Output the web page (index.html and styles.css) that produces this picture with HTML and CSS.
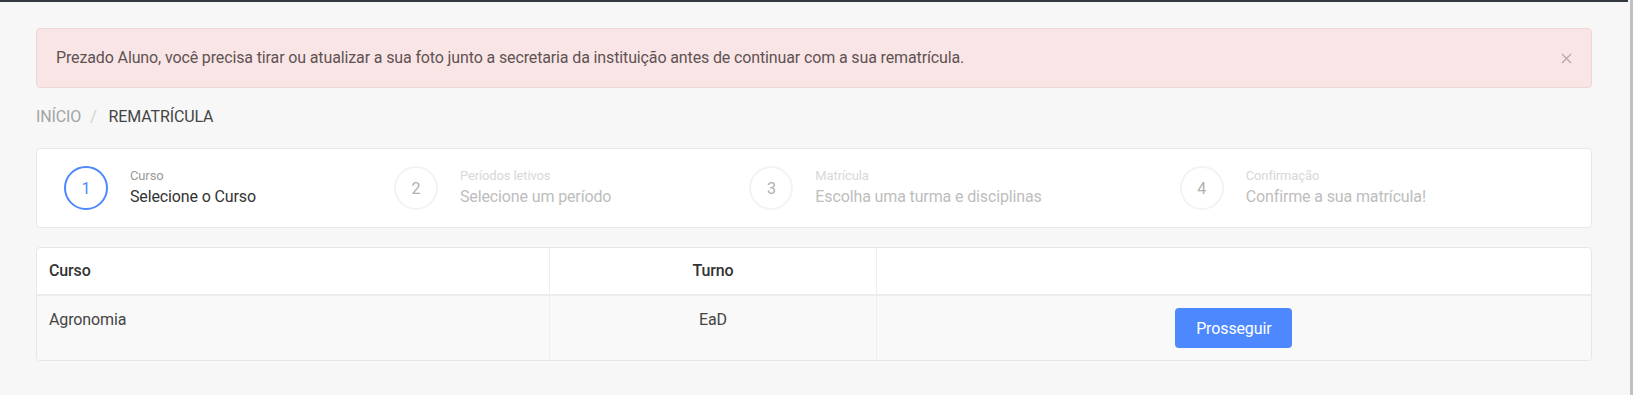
FILE: index.html
```html
<!DOCTYPE html>
<html>
<head>
  <meta charset="utf-8" />
  <title>Rematrícula</title>
  <meta name="viewport" content="width=device-width, initial-scale=1">
  <link rel="stylesheet" href="styles.css">
</head>
<body>
  <div class="shell">
    <div class="page">
      <div class="topbar"></div>
      <main class="content">
        <div class="alert">
          <span class="alert-text">Prezado Aluno, você precisa tirar ou atualizar a sua foto junto a secretaria da instituição antes de continuar com a sua rematrícula.</span>
          <button class="close" type="button" aria-label="Fechar">
            <svg width="11" height="11" viewBox="0 0 11 11"><path d="M1 1 L10 10 M10 1 L1 10" stroke="#b3a6a7" stroke-width="1.2" fill="none"/></svg>
          </button>
        </div>

        <ol class="breadcrumb">
          <li class="crumb">Início</li>
          <li class="crumb active">Rematrícula</li>
        </ol>

        <div class="stepper">
          <div class="step current">
            <div class="step-num">1</div>
            <div class="step-text">
              <div class="step-label">Curso</div>
              <div class="step-title">Selecione o Curso</div>
            </div>
          </div>
          <div class="step">
            <div class="step-num">2</div>
            <div class="step-text">
              <div class="step-label">Períodos letivos</div>
              <div class="step-title">Selecione um período</div>
            </div>
          </div>
          <div class="step">
            <div class="step-num">3</div>
            <div class="step-text">
              <div class="step-label">Matrícula</div>
              <div class="step-title">Escolha uma turma e disciplinas</div>
            </div>
          </div>
          <div class="step">
            <div class="step-num">4</div>
            <div class="step-text">
              <div class="step-label">Confirmação</div>
              <div class="step-title">Confirme a sua matrícula!</div>
            </div>
          </div>
        </div>

        <div class="table-card">
          <table class="courses">
            <thead>
              <tr>
                <th class="col-curso">Curso</th>
                <th class="col-turno">Turno</th>
                <th></th>
              </tr>
            </thead>
            <tbody>
              <tr>
                <td>Agronomia</td>
                <td class="center">EaD</td>
                <td class="center"><button class="btn" type="button">Prosseguir</button></td>
              </tr>
            </tbody>
          </table>
        </div>
      </main>
    </div>
    <div class="scrollbar"></div>
  </div>
</body>
</html>
```

FILE: styles.css
```css
html, body {
  margin: 0;
  padding: 0;
}

body {
  background: #f7f7f7;
  font-family: Roboto, "Liberation Sans", sans-serif;
  font-size: 16px;
  letter-spacing: -0.13px;
  color: #333;
}

.shell {
  display: flex;
  min-height: 100vh;
}

.page {
  flex: 1;
}

.scrollbar {
  width: 3px;
  margin-left: 2px;
  background: #c1c1c1;
}

.topbar {
  height: 2px;
  background: #343a40;
}

.content {
  padding: 26px 36px 0 36px;
}

/* alert */
.alert {
  display: flex;
  align-items: center;
  padding: 17px 19px 17px 19px;
  line-height: 24px;
  background: #fae5e6;
  border: 1px solid #f1d6d8;
  border-radius: 4px;
  color: #5e5353;
}

.alert-text {
  flex: 1;
}

.close {
  display: flex;
  padding: 0;
  border: 0;
  background: none;
  cursor: pointer;
}

/* breadcrumb */
.breadcrumb {
  display: flex;
  margin: 17px 0 19px 0;
  padding: 0;
  list-style: none;
  line-height: 24px;
  text-transform: uppercase;
}

.crumb {
  color: #a3a3a3;
}

.crumb + .crumb::before {
  content: "/";
  padding: 0 12px 0 9px;
  color: #d0d0d0;
}

.crumb.active {
  color: #444;
}

/* stepper */
.stepper {
  display: flex;
  gap: 138px;
  padding: 17px 27px;
  background: #fff;
  border: 1px solid #e8e8e8;
  border-radius: 4px;
  margin-bottom: 19px;
}

.step {
  display: flex;
  align-items: center;
  gap: 22px;
}

.step-num {
  box-sizing: border-box;
  width: 44px;
  height: 44px;
  border: 2px solid #f3f3f3;
  border-radius: 50%;
  display: flex;
  align-items: center;
  justify-content: center;
  color: #b0b0b0;
  font-size: 16px;
}

.step-label {
  font-size: 13px;
  line-height: 18px;
  color: #d8d8d8;
}

.step-title {
  font-size: 16px;
  line-height: 24px;
  color: #bdbdbd;
}

.step.current .step-num {
  border-color: #4d88ff;
  color: #4d88ff;
}

.step.current .step-label {
  color: #9a9a9a;
}

.step.current .step-title {
  color: #333;
}

/* table */
.table-card {
  background: #fff;
  border: 1px solid #e6e6e6;
  border-radius: 4px;
  overflow: hidden;
}

.courses {
  width: 100%;
  border-collapse: collapse;
}

.courses th,
.courses td {
  padding: 12px;
  text-align: left;
  vertical-align: top;
  border-left: 1px solid #eee;
}

.courses th:first-child,
.courses td:first-child {
  border-left: 0;
}

.courses th {
  font-weight: 500;
  line-height: 22px;
  color: #333;
  border-bottom: 2px solid #ececec;
}

.courses td {
  line-height: 24px;
  background: #f9f9f9;
  color: #444;
}

.courses .col-curso {
  width: 33%;
}

.courses .col-turno {
  width: 21%;
  text-align: center;
}

.courses .center {
  text-align: center;
}

.btn {
  height: 40px;
  padding: 0 21px;
  border: 0;
  border-radius: 4px;
  background: #4d88ff;
  color: #fff;
  font-family: inherit;
  font-size: 16px;
  letter-spacing: inherit;
  cursor: pointer;
}
```
